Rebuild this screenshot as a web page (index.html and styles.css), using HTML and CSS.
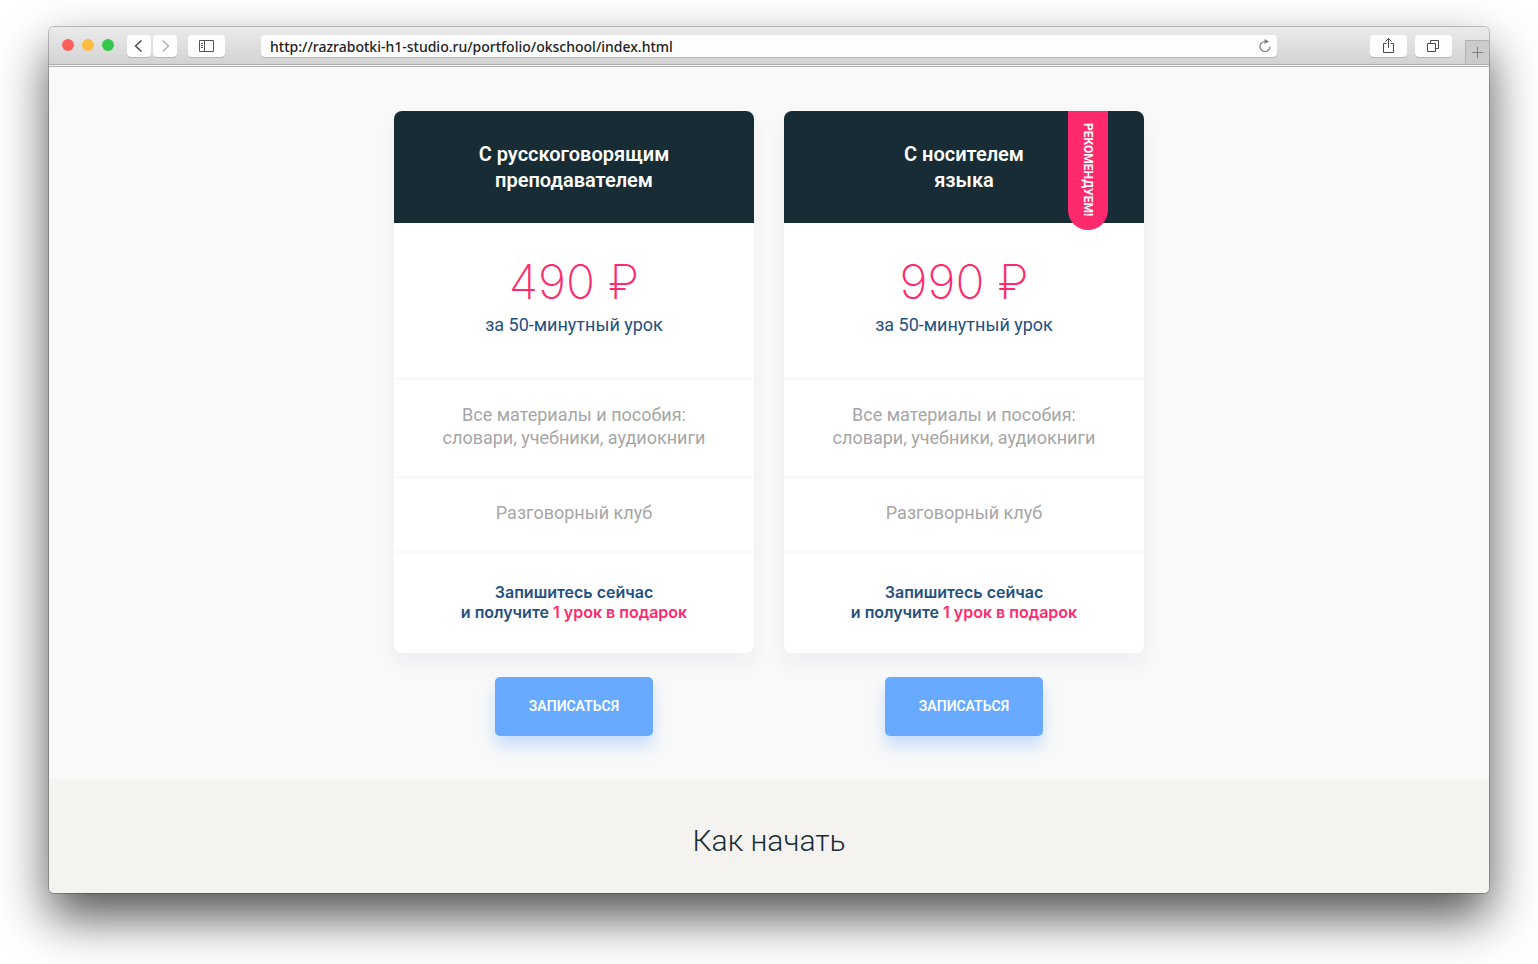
FILE: index.html
```html
<!DOCTYPE html>
<html lang="ru">
<head>
	<meta charset="UTF-8">
	<title>OK School</title>
	<link rel="stylesheet" href="styles.css">
</head>
<body>
	<div class="window">
		<header class="toolbar">
			<div class="lights">
				<button type="button" class="light red" aria-label="Закрыть"></button>
				<button type="button" class="light yellow" aria-label="Свернуть"></button>
				<button type="button" class="light green" aria-label="Развернуть"></button>
			</div>
			<div class="nav">
				<button type="button" class="tool small" aria-label="Назад">
					<svg width="24" height="22" viewBox="0 0 24 22"><path d="M14.500 5.500L8.500 11l6 5.500" fill="none" stroke="#4a4a4a" stroke-width="1.500"/></svg>
				</button>
				<button type="button" class="tool small" aria-label="Вперёд">
					<svg width="24" height="22" viewBox="0 0 24 22"><path d="M9.500 5.500L15.500 11l-6 5.500" fill="none" stroke="#b4b4b4" stroke-width="1.500"/></svg>
				</button>
			</div>
			<button type="button" class="tool" aria-label="Боковая панель">
				<svg width="37" height="22" viewBox="0 0 37 22"><path d="M11.500 5.500h14v11h-14zM16.500 5.500v11M13 8.500h2M13 10.500h2M13 12.500h2" fill="none" stroke="#555" stroke-width="1"/></svg>
			</button>
			<div class="address">
				<input type="text" class="url" aria-label="Адрес" value="http://razrabotki-h1-studio.ru/portfolio/okschool/index.html">
				<button type="button" class="reload" aria-label="Обновить">
					<svg width="14" height="16" viewBox="0 0 14 16"><path d="M7 3.500a5 5 0 1 0 5 5" fill="none" stroke="#808080" stroke-width="1.200"/><path d="M6.500 1l4.500 2.500-4.500 2.500z" fill="#808080"/></svg>
				</button>
			</div>
			<div class="actions">
				<button type="button" class="tool" aria-label="Поделиться">
					<svg width="37" height="22" viewBox="0 0 37 22"><path d="M16.500 8.500h-3v9h10v-9h-3M18.500 13V3.500M15.500 6.500l3-3 3 3" fill="none" stroke="#4a4a4a" stroke-width="1"/></svg>
				</button>
				<button type="button" class="tool" aria-label="Вкладки">
					<svg width="37" height="22" viewBox="0 0 37 22"><path d="M12.500 8.500h8v8h-8zM15.500 8.500v-3h8v8h-3" fill="none" stroke="#4a4a4a" stroke-width="1"/></svg>
				</button>
			</div>
			<button type="button" class="plus" aria-label="Новая вкладка">
				<svg width="11" height="11" viewBox="0 0 11 11"><path d="M5.500 0v11M0 5.500h11" stroke="#808080" stroke-width="1"/></svg>
			</button>
		</header>
		<main>
			<section class="prices">
				<div class="item">
					<div class="card">
						<h3 class="card-title">С русскоговорящим<br>преподавателем</h3>
						<div class="cost">
							<p class="sum">490 ₽</p>
							<p class="unit">за 50-минутный урок</p>
						</div>
						<p class="option">Все материалы и пособия:<br>словари, учебники, аудиокниги</p>
						<p class="option">Разговорный клуб</p>
						<p class="promo">Запишитесь сейчас<br>и получите <span class="gift">1 урок в подарок</span></p>
					</div>
					<button type="button" class="btn">ЗАПИСАТЬСЯ</button>
				</div>
				<div class="item">
					<div class="card">
						<span class="ribbon">РЕКОМЕНДУЕМ!</span>
						<h3 class="card-title">С носителем<br>языка</h3>
						<div class="cost">
							<p class="sum">990 ₽</p>
							<p class="unit">за 50-минутный урок</p>
						</div>
						<p class="option">Все материалы и пособия:<br>словари, учебники, аудиокниги</p>
						<p class="option">Разговорный клуб</p>
						<p class="promo">Запишитесь сейчас<br>и получите <span class="gift">1 урок в подарок</span></p>
					</div>
					<button type="button" class="btn">ЗАПИСАТЬСЯ</button>
				</div>
			</section>
			<section class="start">
				<h2 class="start-title">Как начать</h2>
			</section>
		</main>
	</div>
</body>
</html>
```
FILE: styles.css
```css
* {
	box-sizing: border-box;
	margin: 0;
	padding: 0;
}

body {
	padding: 27px 49px 71px;
	background: #fff;
	font-family: Roboto, "Liberation Sans", sans-serif;
	overflow-x: hidden;
}

button {
	border: 0;
	font-family: inherit;
	cursor: pointer;
}

svg {
	display: block;
}

.window {
	border-radius: 5px;
	background: #f9f9f9;
	box-shadow: 0 0 0 1px rgba(0, 0, 0, .22), 0 24px 50px rgba(0, 0, 0, .68);
}

/* browser toolbar */
.toolbar {
	display: flex;
	align-items: flex-start;
	height: 40px;
	padding: 8px 0 0 13px;
	border-bottom: 1px solid #b0b0b0;
	border-radius: 5px 5px 0 0;
	background: linear-gradient(#ebebeb, #d3d3d3 37px, #b0b0b0 37px, #b0b0b0 38px, #f3f3f3 38px);
}

.lights {
	display: flex;
	gap: 8px;
	padding-top: 4px;
}

.light {
	width: 12px;
	height: 12px;
	border-radius: 50%;
}

.red {
	background: #fc605b;
}

.yellow {
	background: #fdbc40;
}

.green {
	background: #34c84a;
}

.nav {
	display: flex;
	gap: 2px;
	margin: 0 11px 0 13px;
}

.tool {
	width: 37px;
	height: 22px;
	border-radius: 4px;
	background: #fdfdfd;
	box-shadow: 0 1px 0 rgba(0, 0, 0, .16);
}

.small {
	width: 24px;
}

.address {
	display: flex;
	align-items: center;
	flex: 1;
	height: 22px;
	margin: 0 93px 0 36px;
	padding: 0 5px 0 9px;
	border-radius: 4px;
	background: #fdfdfd;
	box-shadow: 0 1px 0 rgba(0, 0, 0, .16);
}

.url {
	flex: 1;
	height: 22px;
	border: 0;
	background: none;
	font-family: "Noto Sans", sans-serif;
	font-size: 14px;
	font-weight: 500;
	color: #222;
	outline: none;
}

.reload {
	background: none;
}

.actions {
	display: flex;
	gap: 8px;
}

.plus {
	display: flex;
	align-items: center;
	justify-content: center;
	width: 24px;
	height: 24px;
	margin: 5px 0 0 13px;
	border: 1px solid #b0b0b0;
	border-width: 1px 0 0 1px;
	background: #cbcbcb;
}

/* prices */
.prices {
	display: flex;
	justify-content: center;
	gap: 30px;
	padding: 44px 20px 43px;
}

.item {
	display: flex;
	flex-direction: column;
	align-items: center;
	gap: 24px;
	flex: 0 1 360px;
}

.card {
	position: relative;
	width: 100%;
	border-radius: 8px;
	background: #fff;
	box-shadow: 0 10px 20px rgba(22, 44, 80, .05);
	text-align: center;
}

.card-title {
	padding: 30px 20px;
	border-radius: 8px 8px 0 0;
	background: #172c34;
	color: #fff;
	font-size: 20px;
	font-weight: 600;
	line-height: 26px;
}

.ribbon {
	position: absolute;
	top: 0;
	right: 36px;
	width: 40px;
	height: 119px;
	padding-top: 12px;
	border-radius: 0 0 20px 20px;
	background: #ff2a6d;
	color: #fff;
	font-size: 12px;
	font-weight: 700;
	line-height: 40px;
	text-align: left;
	writing-mode: vertical-rl;
}

.cost {
	padding: 32px 20px 42px;
}

.sum {
	margin-bottom: 4px;
	color: #ff2a6d;
	font-family: Inter, sans-serif;
	font-size: 48px;
	font-weight: 200;
	line-height: 54px;
}

.unit {
	color: #245080;
	font-size: 18px;
	line-height: 23px;
}

.option {
	padding: 23px 20px 27px;
	border-top: 2px solid #f8f8f8;
	color: #a6a6a6;
	font-size: 18px;
	line-height: 23px;
}

.promo {
	padding: 29px 20px 31px;
	border-top: 2px solid #f8f8f8;
	color: #245080;
	font-family: Inter, sans-serif;
	font-size: 16px;
	font-weight: 600;
	line-height: 20px;
}

.gift {
	color: #ff2a6d;
}

.btn {
	width: 158px;
	height: 59px;
	padding-bottom: 2px;
	border-radius: 5px;
	background: #67aaff;
	box-shadow: 0 10px 16px rgba(103, 170, 255, .35);
	color: #fff;
	font-size: 14px;
	font-weight: 600;
}

/* how to start */
.start {
	padding: 42px 20px 32px;
	border-radius: 0 0 5px 5px;
	background: #f5f3ef;
}

.start-title {
	color: #172c34;
	font-size: 30px;
	font-weight: 300;
	line-height: 40px;
	text-align: center;
}
```
